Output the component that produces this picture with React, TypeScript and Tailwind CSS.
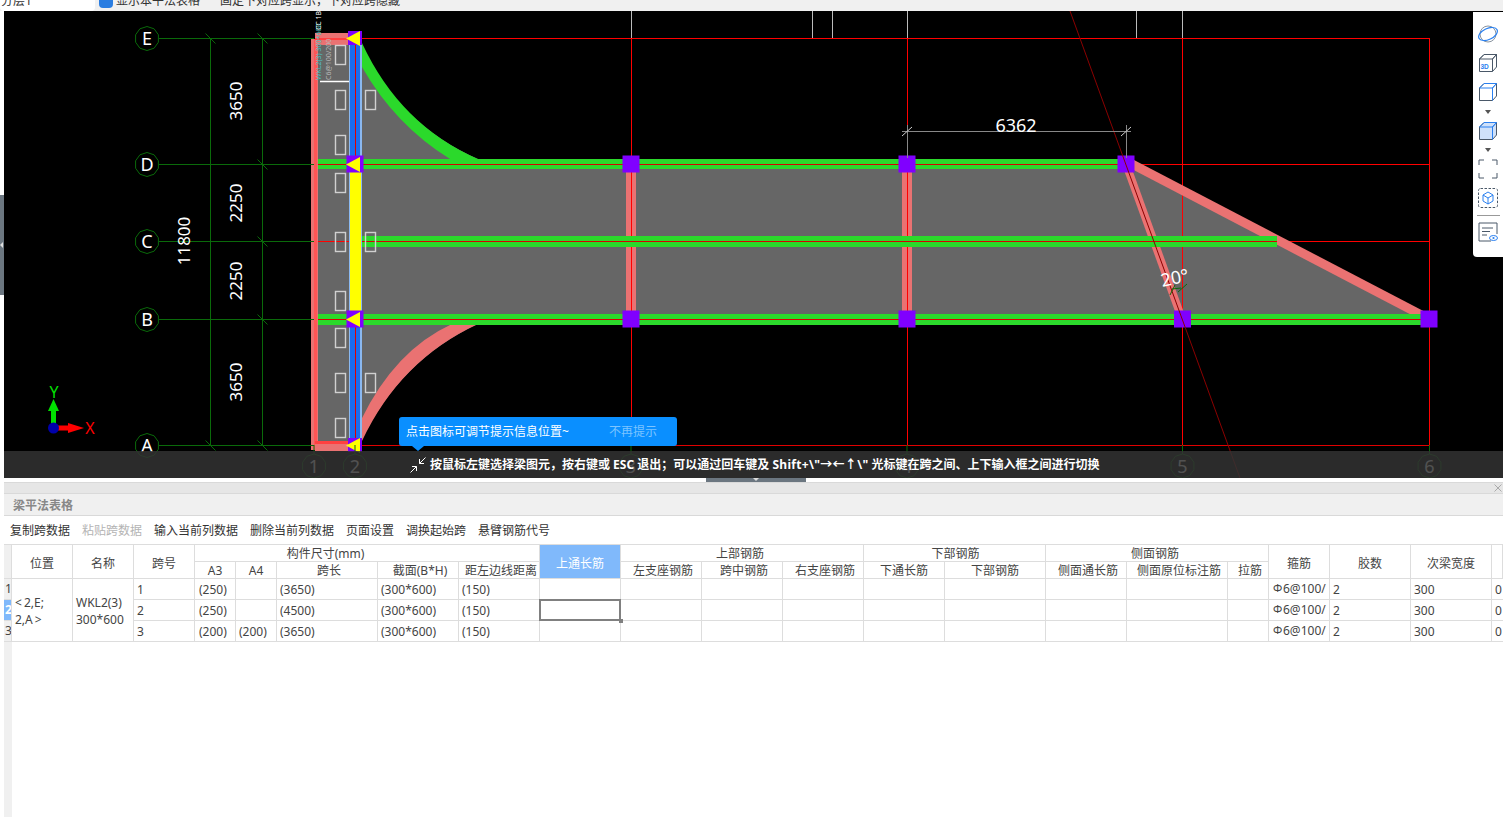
const DIM = '#0a6a0a';
const PINK = '#ea7272';
const GREEN = '#2bd92b';
const PURPLE = '#8000ff';
const RED = '#ff0000';

const rowAxes = [
  { label: 'E', y: 38.5 },
  { label: 'D', y: 164.5 },
  { label: 'C', y: 241.5 },
  { label: 'B', y: 319.5 },
  { label: 'A', y: 445.5 },
];
const colAxes = [
  { label: '1', x: 314 },
  { label: '2', x: 355 },
  { label: '3', x: 631 },
  { label: '4', x: 907 },
  { label: '5', x: 1182.5 },
  { label: '6', x: 1429.5 },
];
const stirrupBoxes = [
  [335, 45], [335, 90], [335, 135], [335, 173], [335, 232], [335, 291], [335, 328], [335, 373], [335, 418],
  [365, 90], [365, 232], [365, 373],
];
const nodes = [
  [631, 164], [907, 164], [1126, 164], [631, 319], [907, 319], [1182.5, 319], [1429, 319],
];

function bubblePoints(cx: number, cy: number) {
  const pts = [];
  for (let i = 0; i < 10; i++) {
    const a = (Math.PI * 2 * i) / 10 + Math.PI / 10;
    pts.push(`${(cx + 12 * Math.cos(a)).toFixed(1)},${(cy + 12 * Math.sin(a)).toFixed(1)}`);
  }
  return pts.join(' ');
}

function Bubble({ x, y, label }: { x: number; y: number; label: string }) {
  return (
    <g>
      <polygon points={bubblePoints(x, y)} fill="#000" stroke={DIM} strokeWidth="1" />
      <text x={x} y={y + 6.5} fontSize="18" fill="#fff" textAnchor="middle">{label}</text>
    </g>
  );
}

function Tick({ x, y }: { x: number; y: number }) {
  return <line x1={x - 5} y1={y - 5} x2={x + 5} y2={y + 5} stroke={DIM} />;
}

function DimText({ x, y, value }: { x: number; y: number; value: string }) {
  return (
    <text x={x} y={y} fontSize="17" fill="#fff" textAnchor="middle" transform={`rotate(-90 ${x} ${y})`}>{value}</text>
  );
}

function EndMarker({ x, y, size }: { x: number; y: number; size: number }) {
  return (
    <g>
      <rect x={x - size / 2} y={y - size / 2} width={size} height={size} fill={PURPLE} />
      <polygon points={`${x - 9},${y + 0.5} ${x + 5},${y - 7} ${x + 5},${y + 8}`} fill="#ffff00" />
    </g>
  );
}

function Drawing() {
  return (
    <svg viewBox="4 11 1499 467" className="block w-[1499px] h-[467px] font-['Noto_Sans',sans-serif]">
      <rect x="4" y="11" width="1499" height="467" fill="#000" />

      {/* slab */}
      <path d="M360 44 Q400 125 478 159 L1130 164 L1429 319 L478 324 Q400 360 361 441 Z" fill="#666" />
      <rect x="316" y="40" width="46" height="405" fill="#666" />

      {/* upper stubs over the top edge */}
      <g shapeRendering="crispEdges">
        <line x1="631.5" y1="11" x2="631.5" y2="38" stroke="#bbb" />
        <line x1="812.5" y1="11" x2="812.5" y2="38" stroke="#bbb" />
        <line x1="832.5" y1="11" x2="832.5" y2="38" stroke="#bbb" />
        <line x1="907.5" y1="11" x2="907.5" y2="38" stroke="#bbb" />
        <line x1="1136.5" y1="11" x2="1136.5" y2="38" stroke="#bbb" />
        <line x1="1182.5" y1="11" x2="1182.5" y2="38" stroke="#bbb" />
      </g>

      {/* grid */}
      <g shapeRendering="crispEdges">
        <line x1="345" y1="38.5" x2="1430" y2="38.5" stroke={RED} />
        <line x1="316" y1="164.5" x2="1429" y2="164.5" stroke={RED} />
        <line x1="316" y1="241.5" x2="1429" y2="241.5" stroke={RED} />
        <line x1="316" y1="319.5" x2="1429" y2="319.5" stroke={RED} />
        <line x1="360" y1="445.5" x2="1430" y2="445.5" stroke="#e00000" />
        <line x1="631.5" y1="38" x2="631.5" y2="445" stroke={RED} />
        <line x1="907.5" y1="38" x2="907.5" y2="445" stroke={RED} />
        <line x1="1182.5" y1="38" x2="1182.5" y2="445" stroke={RED} />
        <line x1="1429.5" y1="38" x2="1429.5" y2="445" stroke={RED} />
      </g>

      {/* beams */}
      <path d="M362 43 Q400 125 478 159 L450 159 Q395 125 362 67 Z" fill={GREEN} />
      <path d="M361 420 Q395 350 452 324 L478 324 Q400 360 362 441 Z" fill={PINK} />
      <rect x="626" y="169" width="10" height="145" fill={PINK} />
      <rect x="902" y="169" width="10" height="145" fill={PINK} />
      <line x1="631.5" y1="169" x2="631.5" y2="314" stroke={RED} />
      <line x1="907.5" y1="169" x2="907.5" y2="314" stroke={RED} />
      <line x1="1126" y1="164" x2="1182" y2="319" stroke={PINK} strokeWidth="8" />
      <line x1="1130" y1="163" x2="1429" y2="319" stroke={PINK} strokeWidth="9" />
      <rect x="315" y="159" width="804" height="10" fill={GREEN} />
      <rect x="362" y="236" width="915" height="11" fill={GREEN} />
      <rect x="315" y="314" width="1106" height="11" fill={GREEN} />
      <line x1="316" y1="164.5" x2="1120" y2="164.5" stroke="#d80000" />
      <line x1="362" y1="241.5" x2="1277" y2="241.5" stroke="#d80000" />
      <line x1="316" y1="319.5" x2="1429" y2="319.5" stroke="#d80000" />

      {/* left wall beam */}
      <rect x="311" y="39" width="7" height="411" fill={PINK} />
      <rect x="314" y="39" width="3" height="411" fill="#ff5555" />
      <rect x="315" y="33" width="36" height="12" fill={PINK} />
      <rect x="315" y="441" width="36" height="10" fill={PINK} />
      <rect x="315" y="38" width="34" height="2" fill="#ff4040" />
      <rect x="315" y="441" width="36" height="3" fill="#ff4040" />
      <rect x="349" y="44" width="13" height="398" fill="#8ab8f0" />
      <rect x="350" y="44" width="10" height="398" fill="#1a6cf0" />
      <line x1="355.5" y1="44" x2="355.5" y2="442" stroke="#e00000" />
      <rect x="350" y="164" width="11" height="155" fill="#ffff00" />

      {stirrupBoxes.map(([x, y]) => (
        <rect key={`${x}-${y}`} x={x + 0.5} y={y + 0.5} width="10" height="19" fill="none" stroke="#d0d0d0" strokeWidth="1.4" />
      ))}
      <line x1="320" y1="81.5" x2="349" y2="81.5" stroke="#fff" strokeWidth="1.5" />
      <text x="321" y="80" fontSize="7" fill="#4fc0c0" transform="rotate(-90 321 80)">WKL2(3) 300*600</text>
      <text x="321" y="30" fontSize="7" fill="#fff" transform="rotate(-90 321 30)">CC 1B3</text>
      <text x="331" y="80" fontSize="7" fill="#b8b8b8" transform="rotate(-90 331 80)">C6@100/200</text>

      {nodes.map(([x, y]) => (
        <rect key={`${x}-${y}`} x={x - 8.5} y={y - 8.5} width="17" height="17" fill={PURPLE} />
      ))}
      <EndMarker x={355} y={38} size={14} />
      <EndMarker x={355} y={164} size={17} />
      <EndMarker x={355} y={319} size={17} />
      <EndMarker x={355} y={445} size={14} />

      {/* diagonal guide */}
      <line x1="1070" y1="11" x2="1240" y2="478" stroke="#8a0000" />

      {/* left dimensions */}
      <g shapeRendering="crispEdges">
        {rowAxes.map((a) => (
          <line key={a.label} x1="159" y1={a.y} x2="314" y2={a.y} stroke={DIM} />
        ))}
        <line x1="210.5" y1="38" x2="210.5" y2="445" stroke={DIM} />
        <line x1="262.5" y1="38" x2="262.5" y2="445" stroke={DIM} />
      </g>
      <Tick x={210.5} y={38.5} />
      <Tick x={210.5} y={445.5} />
      {rowAxes.map((a) => (
        <Tick key={a.label} x={262.5} y={a.y} />
      ))}
      <DimText x={242} y={101} value="3650" />
      <DimText x={242} y={203} value="2250" />
      <DimText x={242} y={281} value="2250" />
      <DimText x={242} y={382} value="3650" />
      <DimText x={190} y={241} value="11800" />
      {rowAxes.map((a) => (
        <Bubble key={a.label} x={147} y={a.y} label={a.label} />
      ))}

      {/* bottom axis bubbles, dimmed by the status bar */}
      {colAxes.map((a) => (
        <g key={a.label}>
          <line x1={a.x} y1="445" x2={a.x} y2="454" stroke={DIM} />
          <Bubble x={a.x} y={466} label={a.label} />
        </g>
      ))}

      {/* 6362 dimension */}
      <line x1="907.5" y1="125" x2="907.5" y2="158" stroke="#888" />
      <line x1="1126.5" y1="125" x2="1126.5" y2="158" stroke="#888" />
      <line x1="902" y1="131.5" x2="1131" y2="131.5" stroke="#888" />
      <line x1="902" y1="136" x2="912" y2="127" stroke="#ccc" />
      <line x1="1121" y1="136" x2="1131" y2="127" stroke="#ccc" />
      <text x="1016" y="132" fontSize="18" fill="#fff" textAnchor="middle">6362</text>

      {/* angle */}
      <text x="1176" y="284" fontSize="18" fill="#fff" textAnchor="middle" transform="rotate(-12 1176 284)">20°</text>
      <path d="M1170 295 L1175 285 M1178 292 L1187 284 M1172 289 L1181 288" stroke={DIM} fill="none" />

      {/* axis gizmo */}
      <rect x="51" y="410" width="5" height="18" fill="#00e000" />
      <polygon points="53.5,399 48,411 59,411" fill="#00e000" />
      <text x="54" y="398" fontSize="16" fill="#00e000" textAnchor="middle">Y</text>
      <rect x="53" y="425.5" width="16" height="5" fill="#ff0000" />
      <polygon points="84,428 68,423 68,433" fill="#ff0000" />
      <text x="90" y="434" fontSize="16" fill="#ff0000" textAnchor="middle">X</text>
      <circle cx="53.5" cy="428" r="5.5" fill="#0000aa" />
    </svg>
  );
}

function ViewCube({ top, body }: { top?: string; body?: string }) {
  return (
    <>
      <path d="M1.5 6 L6 1.5 H18.5 V14 L14.5 18.5 H1.5 Z" fill={body ?? 'none'} stroke="#4a5868" strokeWidth="1" strokeLinejoin="round" />
      <path d="M1.5 6 L6 1.5 H18.5 L14.5 6 Z" fill="none" stroke={top ?? '#4a5868'} strokeWidth="1" />
      <path d="M14.5 6 V18.5 M14.5 6 L18.5 1.5" fill="none" stroke={top ?? '#4a5868'} strokeWidth="1" />
    </>
  );
}

function ToolIcon({ children }: { children: React.ReactNode }) {
  return <svg viewBox="0 0 20 20" className="block w-5 h-5">{children}</svg>;
}

function Caret() {
  return <div className="w-0 h-0 border-x-[3.5px] border-x-transparent border-t-[4px] border-t-[#555]" />;
}

function ViewToolbar() {
  return (
    <div className="absolute right-0 top-[1px] w-[30px] h-[245px] bg-white flex flex-col items-center pt-[12px] rounded-bl-sm shadow-[0_0_2px_rgba(0,0,0,0.3)]">
      <ToolIcon>
        <circle cx="10" cy="10" r="8" fill="none" stroke="#8a94a0" />
        <ellipse cx="10" cy="10" rx="10" ry="5.5" transform="rotate(-25 10 10)" fill="none" stroke="#2a80f0" strokeWidth="1.2" />
      </ToolIcon>
      <div className="mt-[9px]">
        <ToolIcon>
          <ViewCube />
          <text x="2.5" y="16" fontSize="6.5" fontWeight="700" fill="#2a80f0" fontFamily="Liberation Sans, sans-serif">3D</text>
        </ToolIcon>
      </div>
      <div className="mt-[9px]">
        <ToolIcon>
          <ViewCube top="#2a80f0" />
        </ToolIcon>
      </div>
      <div className="mt-[8px]"><Caret /></div>
      <div className="mt-[7px]">
        <ToolIcon>
          <ViewCube top="#2a80f0" body="#cfe1fa" />
        </ToolIcon>
      </div>
      <div className="mt-[7px]"><Caret /></div>
      <div className="mt-[7px]">
        <ToolIcon>
          <path d="M1 6 V1 H6 M14 1 H19 V6 M19 14 V19 H14 M6 19 H1 V14" fill="none" stroke="#4a5868" strokeWidth="1" />
        </ToolIcon>
      </div>
      <div className="mt-[9px]">
        <ToolIcon>
          <rect x="0.5" y="0.5" width="19" height="19" rx="2" fill="none" stroke="#4a5868" strokeDasharray="2.5 1.5" />
          <path d="M10 4 L15 7 V13 L10 16 L5 13 V7 Z M5 7 L10 10 L15 7 M10 10 V16" fill="none" stroke="#2a80f0" />
        </ToolIcon>
      </div>
      <div className="mt-[7px] w-[23px] h-px bg-[#999]" />
      <div className="mt-[6px]">
        <ToolIcon>
          <path d="M13 19 H1 V1 H19 V12" fill="none" stroke="#4a5868" />
          <path d="M4 6 H15 M4 9.5 H12 M4 13 H9" stroke="#4a5868" />
          <ellipse cx="15.5" cy="16" rx="4" ry="2.5" fill="#fff" stroke="#2a80f0" />
          <circle cx="15.5" cy="16" r="1.1" fill="#2a80f0" />
        </ToolIcon>
      </div>
    </div>
  );
}

function Cell({ children, className = '' }: { children?: React.ReactNode; className?: string }) {
  return (
    <div className={`border-r border-b border-[#ddd] flex items-center overflow-hidden whitespace-nowrap ${className}`}>
      {children}
    </div>
  );
}

// header cell: text sits a pixel low, the two-row ones two pixels
function Head({ children, className = '' }: { children?: React.ReactNode; className?: string }) {
  return <Cell className={`justify-center pt-[2px] ${className}`}>{children}</Cell>;
}

function TallHead({ children, className = '' }: { children?: React.ReactNode; className?: string }) {
  return <Cell className={`row-span-2 justify-center pt-[4px] ${className}`}>{children}</Cell>;
}

const rows = [
  { no: '1', a3: '(250)', a4: '', span: '(3650)' },
  { no: '2', a3: '(250)', a4: '', span: '(4500)' },
  { no: '3', a3: '(200)', a4: '(200)', span: '(3650)' },
];

function BeamTable() {
  return (
    <div className="grid grid-cols-[8px_61px_61px_61px_41px_41px_101px_81px_81px_81px_81px_81px_81px_81px_101px_81px_101px_41px_61px_81px_81px_11px] grid-rows-[17px_17px_21px_21px_21px] border-t border-[#ddd] text-[12px] text-[#444] leading-none">
      <TallHead className="bg-[#f0f0f0]" />
      <TallHead>位置</TallHead>
      <TallHead>名称</TallHead>
      <TallHead>跨号</TallHead>
      <Head className="col-span-5 pr-[83px]">构件尺寸(mm)</Head>
      <TallHead className="bg-[#80b9fb] text-white border-[#5aa2f5]">上通长筋</TallHead>
      <Head className="col-span-3 pr-[4px]">上部钢筋</Head>
      <Head className="col-span-2 pl-[2px]">下部钢筋</Head>
      <Head className="col-span-3 pr-[4px]">侧面钢筋</Head>
      <TallHead>箍筋</TallHead>
      <TallHead>胶数</TallHead>
      <TallHead>次梁宽度</TallHead>
      <TallHead />

      <Head>A3</Head>
      <Head>A4</Head>
      <Head className="pl-[4px]">跨长</Head>
      <Head className="pl-[4px]">截面(B*H)</Head>
      <Head className="pl-[4px]">距左边线距离</Head>
      <Head className="pl-[4px]">左支座钢筋</Head>
      <Head className="pl-[4px]">跨中钢筋</Head>
      <Head className="pl-[4px]">右支座钢筋</Head>
      <Head>下通长筋</Head>
      <Head>下部钢筋</Head>
      <Head className="pl-[4px]">侧面通长筋</Head>
      <Head className="pl-[4px]">侧面原位标注筋</Head>
      <Head className="pl-[4px]">拉筋</Head>

      {rows.map((r, i) => (
        <div key={r.no} className="contents">
          <Cell className={i === 1 ? 'bg-[#80b9fb] text-white font-bold pl-px' : 'bg-[#f0f0f0] pl-px'}>{r.no}</Cell>
          {i === 0 && (
            <Cell className="row-span-3 pl-[3px] pt-[2px] leading-[17px]">
              <span>&lt;{'\u2009'}2,E;<br />2,A{'\u2009'}&gt;</span>
            </Cell>
          )}
          {i === 0 && (
            <Cell className="row-span-3 pl-[3px] pt-[2px] leading-[17px]">
              <span>WKL2(3)<br />300*600</span>
            </Cell>
          )}
          <Cell className="pl-[3px] pt-[2px]">{r.no}</Cell>
          <Cell className="pl-[4px] pt-[2px]">{r.a3}</Cell>
          <Cell className="pl-[3px] pt-[2px]">{r.a4}</Cell>
          <Cell className="pl-[3px] pt-[2px]">{r.span}</Cell>
          <Cell className="pl-[3px] pt-[2px]">(300*600)</Cell>
          <Cell className="pl-[3px] pt-[2px]">(150)</Cell>
          {i === 1 ? (
            <Cell className="relative overflow-visible">
              <div className="absolute -inset-y-px left-[-1px] right-[-1px] border-2 border-[#808080]" />
              <div className="absolute right-[-3px] bottom-[-3px] w-1 h-1 bg-[#808080]" />
            </Cell>
          ) : (
            <Cell />
          )}
          <Cell />
          <Cell />
          <Cell />
          <Cell />
          <Cell />
          <Cell />
          <Cell />
          <Cell />
          <Cell className="pl-[4px]">
            <span className="w-[10px] text-[11px] -translate-y-[2px]">Φ</span>6@100/
          </Cell>
          <Cell className="pl-[3px] pt-[2px]">2</Cell>
          <Cell className="pl-[3px] pt-[2px]">300</Cell>
          <Cell className="pl-[3px] pt-[2px] border-r-0">0</Cell>
        </div>
      ))}
    </div>
  );
}

export default function App() {
  return (
    <div className="w-[1503px] h-[817px] overflow-hidden flex flex-col bg-white font-['Noto_Sans','Noto_Sans_CJK_SC',sans-serif]">
      {/* window top, mostly scrolled off */}
      <div className="h-[11px] shrink-0 bg-[#f0f0f0] overflow-hidden">
        <div className="flex items-center h-[20px] -mt-[9px] text-[12px] text-[#333]">
          <div className="w-[95px] h-[20px] bg-white rounded-sm pl-px leading-[20px]">分层1</div>
          <div className="ml-[4px] w-[14px] h-[14px] bg-[#2a7de1] rounded-sm" />
          <span className="ml-[3px]">显示本平法表格</span>
          <span className="ml-[20px]">固定下对应跨显示，下对应跨隐藏</span>
        </div>
      </div>

      {/* viewport */}
      <div className="h-[467px] shrink-0 flex">
        <div className="w-[4px] flex items-center bg-white">
          <div className="w-[4px] h-[100px] bg-[#6b7680] flex items-center">
            <div className="w-0 h-0 border-y-[3px] border-y-transparent border-r-[3px] border-r-[#ddd]" />
          </div>
        </div>
        <div className="relative flex-1">
          <Drawing />
          <ViewToolbar />
          <div className="absolute left-[395px] top-[406px] w-[278px] h-[29px] bg-[#0a8fff] rounded-[3px] flex items-center pl-[7px] text-[12px] text-white">
            <span className="w-[203px]">点击图标可调节提示信息位置~</span>
            <span className="text-[#7cc4ff]">不再提示</span>
            <div className="absolute left-[13px] top-[29px] w-0 h-0 border-x-[6px] border-x-transparent border-t-[5px] border-t-[#0a8fff]" />
          </div>
          <div className="absolute inset-x-0 bottom-0 h-[27px] bg-[#333333]/85 flex items-center pl-[406px] text-[12px] font-bold text-white">
            <svg viewBox="0 0 16 16" className="w-4 h-4 shrink-0">
              <path d="M15.5 .5 L9.5 6.5 M9.5 2 V6.5 H14 M.5 15.5 L6.5 9.5 M2 9.5 H6.5 V14" fill="none" stroke="#fff" />
            </svg>
            <span className="ml-[4px] whitespace-nowrap">
              按鼠标左键选择梁图元，按右键或 ESC 退出；可以通过回车键及 <span className="tracking-[0.3px]">Shift+\"→←↑\"</span> 光标键在跨之间、上下输入框之间进行切换
            </span>
          </div>
        </div>
      </div>

      {/* splitter handle */}
      <div className="h-[4px] shrink-0 pl-[706px]">
        <div className="w-[100px] h-[4px] bg-[#6b7680] flex justify-center">
          <div className="w-0 h-0 border-x-[3px] border-x-transparent border-t-[3px] border-t-[#ddd]" />
        </div>
      </div>

      {/* beam table panel */}
      <div className="flex-1 ml-[4px] flex flex-col min-h-0">
        <div className="h-[12px] shrink-0 bg-[#e6e6e6] border-y border-[#d9d9d9] flex justify-end items-center pr-[1px]">
          <svg viewBox="0 0 8 8" className="w-2 h-2">
            <path d="M.5 .5 L7.5 7.5 M7.5 .5 L.5 7.5" stroke="#aaa" />
          </svg>
        </div>
        <div className="h-[22px] shrink-0 bg-[#f0f0f0] border-b border-[#d9d9d9] flex items-center pl-[9px] pt-[2px] text-[12px] font-bold text-[#888]">
          梁平法表格
        </div>
        <div className="h-[28px] shrink-0 flex items-center gap-[12px] pl-[6px] pt-[2px] text-[12px] text-[#333]">
          <span>复制跨数据</span>
          <span className="text-[#b4b4b4]">粘贴跨数据</span>
          <span>输入当前列数据</span>
          <span>删除当前列数据</span>
          <span>页面设置</span>
          <span>调换起始跨</span>
          <span>悬臂钢筋代号</span>
        </div>
        <BeamTable />
        <div className="flex-1 w-[8px] bg-[#f0f0f0]" />
      </div>
    </div>
  );
}
